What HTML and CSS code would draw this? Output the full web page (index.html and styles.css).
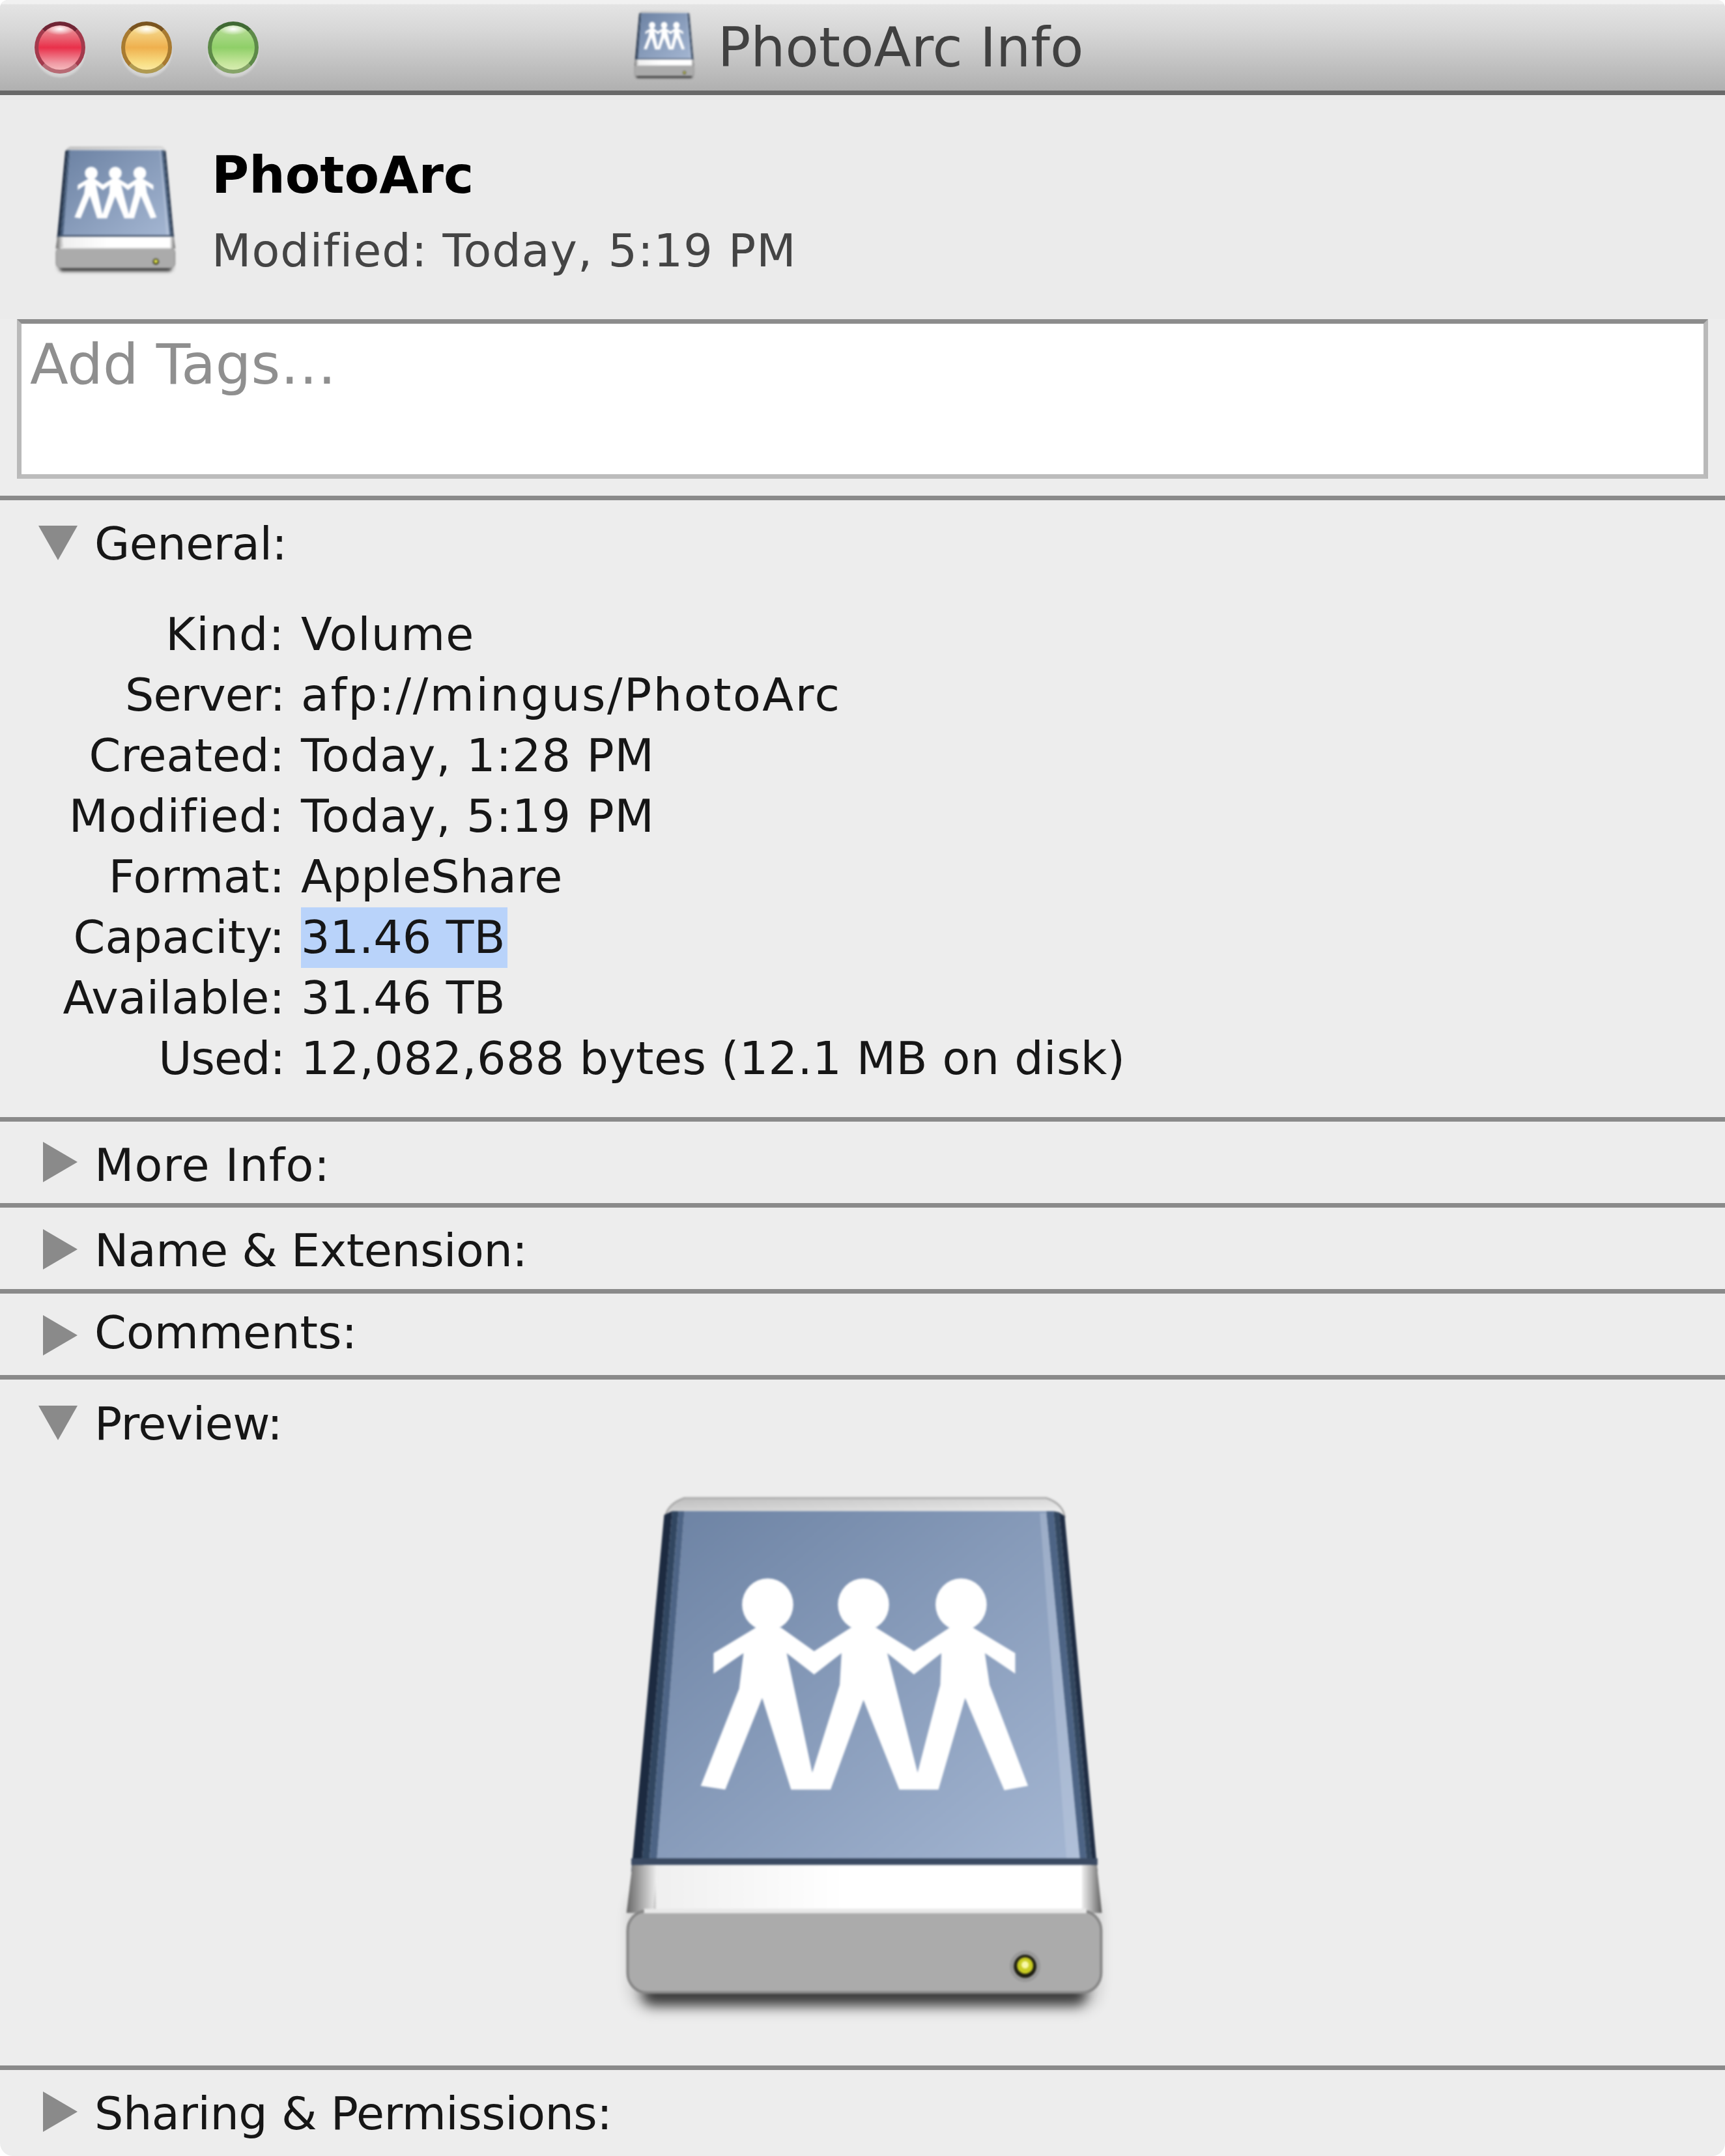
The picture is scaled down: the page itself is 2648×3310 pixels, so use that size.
FILE: index.html
```html
<!DOCTYPE html>
<html lang="en">
<head>
<meta charset="utf-8">
<title>PhotoArc Info</title>
<link rel="stylesheet" href="styles.css">
</head>
<body>
<svg class="defs" width="0" height="0" aria-hidden="true">
  <defs>
    <linearGradient id="face" x1="0" y1="0" x2="1" y2="1">
      <stop offset="0" stop-color="#6c82a3"/>
      <stop offset="1" stop-color="#a4b6d2"/>
    </linearGradient>
    <linearGradient id="lid" x1="0" y1="0" x2="1" y2="1">
      <stop offset="0" stop-color="#bdbdbd"/>
      <stop offset="1" stop-color="#f4f4f4"/>
    </linearGradient>
    <linearGradient id="bandL" x1="0" y1="0" x2="1" y2="0">
      <stop offset="0" stop-color="#666"/>
      <stop offset=".5" stop-color="#aaa"/>
      <stop offset="1" stop-color="#efefef"/>
    </linearGradient>
    <linearGradient id="bandR" x1="0" y1="0" x2="1" y2="0">
      <stop offset="0" stop-color="#f4f4f4"/>
      <stop offset=".5" stop-color="#b0b0b0"/>
      <stop offset="1" stop-color="#5f5f5f"/>
    </linearGradient>
    <linearGradient id="band" x1="0" y1="0" x2="1" y2="0">
      <stop offset="0" stop-color="#efefef"/>
      <stop offset=".45" stop-color="#ffffff"/>
    </linearGradient>
    <filter id="soft" x="-10%" y="-60%" width="120%" height="220%">
      <feGaussianBlur stdDeviation="16"/>
    </filter>
    <filter id="haze" x="-10%" y="-20%" width="120%" height="140%">
      <feGaussianBlur stdDeviation="20"/>
    </filter>
    <symbol id="drive" class="drive" viewBox="130 95 1320 1410" preserveAspectRatio="none">
      <rect class="drive-haze" x="150" y="1150" width="1285" height="320" rx="60" filter="url(#haze)"/>
      <rect class="drive-shadow" x="185" y="1395" width="1215" height="62" rx="30" filter="url(#soft)"/>
      <path d="M300 100 H1290 Q1335 115 1340 150 H248 Q255 115 300 100Z" fill="url(#lid)" stroke="#aaa" stroke-width="5"/>
      <path d="M300 135 H1290 L1382 1066 H225Z" fill="url(#face)"/>
      <path d="M1272 140 H1290 L1382 1066 H1345Z" fill="#cdd8e8" opacity=".3"/>
      <path d="M245 145 L267 135 L183 1085 L155 1100Z" fill="#1c2a40"/>
      <path d="M267 135 L284 135 L204 1075 L183 1085Z" fill="#314660"/>
      <path d="M284 135 L300 135 L225 1066 L204 1075Z" fill="#4d6485"/>
      <path d="M1290 135 L1310 135 L1401 1075 L1382 1066Z" fill="#4d6485"/>
      <path d="M1310 135 L1325 138 L1416 1085 L1401 1075Z" fill="#33475f"/>
      <path d="M1325 138 L1340 148 L1430 1100 L1416 1085Z" fill="#1f2d44"/>
      <path d="M155 1064 H1430 V1082 H155Z" fill="#3a4a62"/>
      <path d="M158 1082 H225 L215 1210 H142Z" fill="url(#bandL)"/>
      <path d="M1385 1082 H1428 L1442 1210 H1385Z" fill="url(#bandR)"/>
      <rect x="222" y="1082" width="1165" height="125" fill="url(#band)"/>
      <rect class="drive-base" x="145" y="1205" width="1295" height="218" rx="52"/>
      <path class="drive-base-top" d="M190 1205 H1400"/>
      <g class="people">
        <circle cx="528" cy="385" r="70"/>
        <circle cx="790" cy="385" r="70"/>
        <circle cx="1057" cy="385" r="70"/>
        <path fill-rule="evenodd" d="M380 515 L495 447 H565 L655 510 L755 447 H825 L928 510 L1025 447 H1090 L1205 515 V570 L1122 515 L1135 600 L1240 870 L1175 882 L1068 635 L995 880 H888 L790 640 L700 880 H592 L513 635 L412 880 L345 870 L450 610 L462 515 L380 570Z M580 515 L655 572 L730 515 L725 600 L650 835Z M855 515 L928 572 L1003 515 L1000 600 L938 835Z"/>
      </g>
      <circle cx="1232" cy="1353" r="42" fill="#999"/>
      <circle cx="1232" cy="1353" r="31" fill="#1d1d12"/>
      <circle cx="1232" cy="1351" r="22" fill="#c9cc22"/>
      <circle cx="1232" cy="1349" r="10" fill="#f8f8a8"/>
    </symbol>
  </defs>
</svg>
<main class="window">
  <header class="titlebar">
    <svg class="title-icon"><use href="#drive"/></svg>
    <h1 class="title">PhotoArc Info</h1>
    <div class="lights">
      <span class="light light-red"></span>
      <span class="light light-yellow"></span>
      <span class="light light-green"></span>
    </div>
  </header>

  <div class="summary">
    <svg class="summary-icon"><use href="#drive"/></svg>
    <div class="summary-text">
      <div class="summary-name">PhotoArc</div>
      <div class="summary-date">Modified: Today, 5:19 PM</div>
    </div>
  </div>

  <div class="tags">Add Tags…</div>

  <section class="panel panel-general">
    <div class="heading track-tight">
      <svg class="tri-down" viewBox="0 0 60 53"><polygon points="0,0 60,0 30,53"/></svg>
      <span>General:</span>
    </div>
    <dl class="props">
      <dt class="track-loose">Kind:</dt><dd class="track-loose">Volume</dd>
      <dt class="track-narrow">Server:</dt><dd class="track-wide">afp://mingus/PhotoArc</dd>
      <dt>Created:</dt><dd class="track-loose">Today, 1:28 PM</dd>
      <dt class="track-loose">Modified:</dt><dd class="track-loose">Today, 5:19 PM</dd>
      <dt>Format:</dt><dd>AppleShare</dd>
      <dt>Capacity:</dt><dd><span class="selected">31.46 TB</span></dd>
      <dt>Available:</dt><dd>31.46 TB</dd>
      <dt class="track-narrow">Used:</dt><dd class="track-slight">12,082,688 bytes (12.1 MB on disk)</dd>
    </dl>
  </section>

  <section class="panel panel-more">
    <div class="heading track-loose">
      <svg class="tri-right" viewBox="0 0 53 62"><polygon points="0,0 53,31 0,62"/></svg>
      <span>More Info:</span>
    </div>
  </section>
  <section class="panel panel-name">
    <div class="heading track-tight">
      <svg class="tri-right" viewBox="0 0 53 62"><polygon points="0,0 53,31 0,62"/></svg>
      <span>Name &amp; Extension:</span>
    </div>
  </section>
  <section class="panel panel-comments">
    <div class="heading">
      <svg class="tri-right" viewBox="0 0 53 62"><polygon points="0,0 53,31 0,62"/></svg>
      <span>Comments:</span>
    </div>
  </section>
  <section class="panel panel-preview">
    <div class="heading track-tight">
      <svg class="tri-down" viewBox="0 0 60 53"><polygon points="0,0 60,0 30,53"/></svg>
      <span>Preview:</span>
    </div>
    <svg class="preview-icon"><use href="#drive"/></svg>
  </section>
  <section class="panel panel-sharing">
    <div class="heading track-tight">
      <svg class="tri-right" viewBox="0 0 53 62"><polygon points="0,0 53,31 0,62"/></svg>
      <span>Sharing &amp; Permissions:</span>
    </div>
  </section>
</main>
</body>
</html>
```
FILE: styles.css
```css
* { box-sizing: border-box; }
html, body { margin: 0; padding: 0; }
body {
  width: 2648px;
  height: 3310px;
  overflow: hidden;
  background: #fff;
  font-family: "DejaVu Sans", "Liberation Sans", sans-serif;
  color: #161616;
}
.defs { position: absolute; }
.drive { overflow: visible; }
.window {
  display: flex;
  flex-direction: column;
  width: 100%;
  height: 100%;
  overflow: hidden;
  border-radius: 12px 12px 20px 20px;
  background: #ededed;
}

.track-loose { letter-spacing: 1px; }
.track-wide { letter-spacing: 2.5px; }
.track-slight { letter-spacing: .4px; }
.track-tight { letter-spacing: -.5px; }
.track-narrow { letter-spacing: -1px; }

.titlebar {
  position: relative;
  display: flex;
  flex: none;
  justify-content: center;
  align-items: center;
  gap: 36px;
  height: 146px;
  padding-right: 12px;
  border-bottom: 7px solid #696969;
  background: linear-gradient(#f1f1f1 0, #f1f1f1 6px, #e4e4e4 7px, #d6d6d6 50px, #b0b0b0 100%);
}
.title-icon { width: 93px; height: 106px; filter: blur(1.5px); }
.title { margin: 6px 0 0; font-size: 84px; font-weight: 400; line-height: 1; color: #414141; }
.lights { position: absolute; left: 53px; top: 33px; display: flex; gap: 55px; }
.light {
  display: block;
  width: 78px;
  height: 80px;
  border: 6px solid;
  border-radius: 50%;
  box-shadow: 0 6px 3px rgba(255, 255, 255, .35);
}
.light-red {
  border-color: #702535 #a33a4c #b86a74;
  background:
    radial-gradient(ellipse 34% 14% at 50% 8%, #fff 0, rgba(255, 255, 255, 0) 100%),
    linear-gradient(#ea8a92 10%, #e9304a 50%, #f09aa4 85%, #f6b8bc);
}
.light-yellow {
  border-color: #7a5420 #a87a30 #b09a50;
  background:
    radial-gradient(ellipse 34% 14% at 50% 8%, #fff 0, rgba(255, 255, 255, 0) 100%),
    linear-gradient(#f4d688 10%, #efb04e 50%, #f8de84 85%, #fbe8a0);
}
.light-green {
  border-color: #406a34 #5d8a48 #86a468;
  background:
    radial-gradient(ellipse 34% 14% at 50% 8%, #fff 0, rgba(255, 255, 255, 0) 100%),
    linear-gradient(#b2dc90 10%, #8fcf68 50%, #c6e69c 85%, #d6ecb0);
}

.summary { display: flex; flex: none; height: 344px; padding: 79px 0 0 84px; background: #ebebeb; }
.summary-icon { width: 186px; height: 198px; flex: none; filter: blur(1.5px); }
.summary-text { margin-left: 55px; }
.summary-name { margin-top: -2px; font-size: 78px; font-weight: 700; line-height: 92px; color: #000; }
.summary-date { margin-top: 24px; font-size: 70px; line-height: 92px; letter-spacing: 1px; color: #444; }

.tags {
  flex: none;
  height: 245px;
  margin: 0 26px 26px;
  padding: 16px 0 0 13px;
  border-style: solid;
  border-width: 7px;
  border-color: #8c8c8c #b9b9b9 #bcbcbc;
  background: #fff;
  font-size: 86px;
  line-height: 92px;
  color: #8f8f8f;
}

.panel { flex: none; border-top: 7px solid #8a8a8a; font-size: 70px; }
.heading { display: flex; height: 93px; padding-left: 145px; position: relative; line-height: 93px; }
.tri-down, .tri-right { position: absolute; fill: #8a8a8a; }
.tri-down { left: 59px; top: 18px; width: 60px; height: 53px; }
.tri-right { left: 66px; top: 10px; width: 53px; height: 62px; }
.panel-name .tri-right { top: 13px; }
.panel-comments .tri-right { top: 19px; }
.panel-sharing .tri-right { top: 12px; }

.panel-general { height: 954px; padding-top: 21px; }
.panel-more { height: 132px; padding-top: 21px; }
.panel-name { height: 132px; padding-top: 20px; }
.panel-comments { height: 132px; padding-top: 14px; }
.panel-preview { height: 1060px; padding-top: 22px; }
.panel-sharing { padding-top: 21px; }

.props {
  display: grid;
  grid-template-columns: 437px 1fr;
  grid-auto-rows: 93px;
  column-gap: 25px;
  margin: 46px 0 0;
  line-height: 93px;
}
.props dt { text-align: right; }
.props dd { margin: 0; }
.selected { display: inline-block; padding-right: 4px; background: #b9d3fa; }

.preview-icon { display: block; width: 741px; height: 809px; margin: 64px 0 0 955px; overflow: visible; filter: blur(1.5px); }
.drive-shadow { fill: #000; opacity: .7; }
.drive-haze { fill: #000; opacity: .16; }
.drive-base { fill: #ababab; stroke: #858585; stroke-width: 7; }
.drive-base-top { stroke: #e8e8e8; stroke-width: 12; fill: none; }
.people { fill: #fff; }
```
